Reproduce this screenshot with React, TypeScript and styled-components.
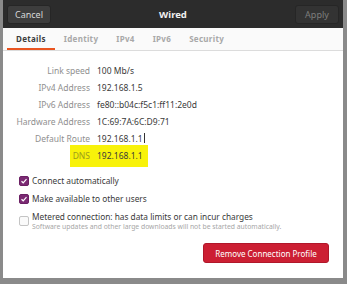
import styled, { createGlobalStyle } from "styled-components";

const GlobalStyle = createGlobalStyle`
  html, body {
    margin: 0;
    padding: 0;
    background: #8c8c8c;
    font-family: "Noto Sans", "DejaVu Sans", sans-serif;
  }
`;

const Backdrop = styled.div`
  width: 347px;
  height: 284px;
  padding: 0 4px 6px 3px;
  box-sizing: border-box;
  background: #8a8a8a;
`;

const Window = styled.div`
  height: 100%;
  background: #ffffff;
  display: flex;
  flex-direction: column;
  overflow: hidden;
`;

const HeaderBar = styled.div`
  height: 28px;
  background: #2c2c2c;
  display: flex;
  align-items: center;
  justify-content: space-between;
  padding: 0 4px;
`;

const HeaderButton = styled.div<{ dim?: boolean }>`
  width: 44px;
  height: 19px;
  border-radius: 3px;
  background: ${({ dim }) => (dim ? "#333333" : "#3d3d3d")};
  border: 1px solid #262626;
  box-sizing: border-box;
  color: ${({ dim }) => (dim ? "#7d7d7d" : "#d8d8d8")};
  font-size: 9px;
  display: flex;
  align-items: center;
  justify-content: center;
`;

const Title = styled.div`
  color: #f0f0f0;
  font-weight: bold;
  font-size: 9.5px;
`;

const TabBar = styled.div`
  height: 22px;
  background: #fafafa;
  border-bottom: 1px solid #dcdcdc;
  display: flex;
  padding-left: 4px;
`;

const Tab = styled.div<{ active?: boolean }>`
  padding: 0 9px;
  display: flex;
  align-items: center;
  font-size: 8px;
  font-weight: bold;
  color: ${({ active }) => (active ? "#3c3c3c" : "#a8a8a8")};
  border-bottom: 2px solid ${({ active }) => (active ? "#e95420" : "transparent")};
  letter-spacing: 0.3px;
`;

const Body = styled.div`
  flex: 1;
  display: flex;
  flex-direction: column;
  padding: 11px 14px 0 16px;
`;

const InfoGrid = styled.div`
  display: grid;
  grid-template-columns: 74px auto;
  column-gap: 7px;
  font-size: 8.5px;
  margin-left: -3px;
`;

const Label = styled.div<{ mark?: boolean }>`
  text-align: right;
  color: ${({ mark }) => (mark ? "#9c9c1c" : "#8f8f8f")};
  height: 17px;
  line-height: 17px;
  white-space: nowrap;
  ${({ mark }) =>
    mark &&
    "background: #f8f20a; margin: -2.5px 0 -2.5px 54px; height: 22px; line-height: 22px;"}
`;

const Value = styled.div<{ mark?: boolean }>`
  color: #3a3a3a;
  height: 17px;
  line-height: 17px;
  white-space: nowrap;
  ${({ mark }) =>
    mark &&
    "background: #f8f20a; width: 51px; margin: -2.5px 0 -2.5px -7px; padding-left: 7px; height: 22px; line-height: 22px;"}
`;

const Caret = styled.span`
  display: inline-block;
  width: 1px;
  height: 10px;
  background: #333;
  vertical-align: -1px;
  margin-left: 1px;
`;

const Checks = styled.div`
  margin-top: 11px;
  display: flex;
  flex-direction: column;
  gap: 6px;
`;

const CheckRow = styled.div`
  display: flex;
  align-items: flex-start;
  gap: 3px;
`;

const Box = styled.div<{ checked?: boolean; low?: boolean }>`
  width: 10px;
  height: 10px;
  border-radius: 2px;
  box-sizing: border-box;
  margin-top: ${({ low }) => (low ? "5px" : "1px")};
  flex-shrink: 0;
  background: ${({ checked }) => (checked ? "#7b2a73" : "#fafafa")};
  border: 1px solid ${({ checked }) => (checked ? "#6b2064" : "#c4c4c4")};
  display: flex;
  align-items: center;
  justify-content: center;
`;

const CheckText = styled.div`
  font-size: 8.3px;
  color: #3a3a3a;
  line-height: 12px;
`;

const SubText = styled.div`
  font-size: 6.8px;
  color: #a6a6a6;
  line-height: 7px;
  white-space: nowrap;
`;

const Footer = styled.div`
  display: flex;
  justify-content: flex-end;
  margin-top: 13px;
`;

const DangerButton = styled.div`
  width: 126px;
  height: 20px;
  background: #cc1f33;
  border: 1px solid #b0172a;
  box-sizing: border-box;
  border-radius: 3px;
  color: #ffffff;
  font-size: 8px;
  display: flex;
  align-items: center;
  justify-content: center;
`;

const Tick = () => (
  <svg width="8" height="8" viewBox="0 0 8 8">
    <path d="M1.5 4.2 L3.2 5.8 L6.5 2.2" fill="none" stroke="#ffffff" strokeWidth="1.2" />
  </svg>
);

const rows: [string, string][] = [
  ["Link speed", "100 Mb/s"],
  ["IPv4 Address", "192.168.1.5"],
  ["IPv6 Address", "fe80::b04c:f5c1:ff11:2e0d"],
  ["Hardware Address", "1C:69:7A:6C:D9:71"],
];

export default function App() {
  return (
    <>
      <GlobalStyle />
      <Backdrop>
        <Window>
          <HeaderBar>
            <HeaderButton>Cancel</HeaderButton>
            <Title>Wired</Title>
            <HeaderButton dim>Apply</HeaderButton>
          </HeaderBar>
          <TabBar>
            <Tab active>Details</Tab>
            <Tab>Identity</Tab>
            <Tab>IPv4</Tab>
            <Tab>IPv6</Tab>
            <Tab>Security</Tab>
          </TabBar>
          <Body>
            <InfoGrid>
              {rows.flatMap(([l, v]) => [
                <Label key={l}>{l}</Label>,
                <Value key={v}>{v}</Value>,
              ])}
              <Label>Default Route</Label>
              <Value>
                192.168.1.1<Caret />
              </Value>
              <Label mark>DNS</Label>
              <Value mark>192.168.1.1</Value>
            </InfoGrid>
            <Checks>
              <CheckRow>
                <Box checked>
                  <Tick />
                </Box>
                <CheckText>Connect automatically</CheckText>
              </CheckRow>
              <CheckRow>
                <Box checked>
                  <Tick />
                </Box>
                <CheckText>Make available to other users</CheckText>
              </CheckRow>
              <CheckRow>
                <Box low />
                <div>
                  <CheckText>Metered connection: has data limits or can incur charges</CheckText>
                  <SubText>Software updates and other large downloads will not be started automatically.</SubText>
                </div>
              </CheckRow>
            </Checks>
            <Footer>
              <DangerButton>Remove Connection Profile</DangerButton>
            </Footer>
          </Body>
        </Window>
      </Backdrop>
    </>
  );
}
